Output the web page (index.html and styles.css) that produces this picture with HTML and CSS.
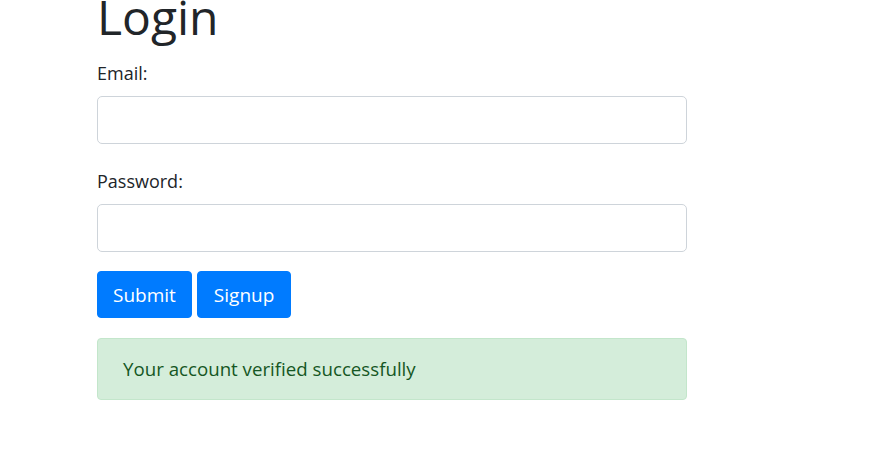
FILE: index.html
```html
<!DOCTYPE html>
<html>
<head>
<meta charset="utf-8">
<link rel="stylesheet" href="styles.css">
</head>
<body>
<div class="container">
  <h1 class="title">Login</h1>
  <form class="form">
    <div class="group">
      <label class="label" for="email">Email:</label>
      <input class="control" id="email" type="email">
    </div>
    <div class="group">
      <label class="label" for="pwd">Password:</label>
      <input class="control" id="pwd" type="password">
    </div>
    <div class="buttons">
      <button type="button" class="btn">Submit</button>
      <button type="button" class="btn btn-wide">Signup</button>
    </div>
    <div class="alert">Your account verified successfully</div>
  </form>
</div>
</body>
</html>
```

FILE: styles.css
```css
html, body {
  margin: 0;
  padding: 0;
  background: #fff;
}
body {
  font-family: "Open Sans", "Noto Sans", sans-serif;
  color: #212529;
  font-size: 18px;
  line-height: 1.5;
}
.container {
  width: 590px;
  padding-left: 97px;
}
.title {
  font-size: 48px;
  font-weight: 400;
  line-height: 56px;
  margin: -11px 0 0 0;
}
.form {
  display: flex;
  flex-direction: column;
}
.group {
  display: flex;
  flex-direction: column;
}
.label {
  display: block;
  font-size: 18px;
  line-height: 24px;
  margin-top: 16px;
  margin-bottom: 11px;
}
.group + .group .label {
  margin-top: 25px;
  margin-bottom: 11px;
}
.control {
  box-sizing: border-box;
  height: 48px;
  width: 100%;
  border: 1px solid #ced4da;
  border-radius: 5px;
  padding: 8px 16px;
  font-size: 20px;
  font-family: inherit;
  margin: 0;
}
.buttons {
  display: flex;
  gap: 5px;
  margin-top: 19px;
}
.btn {
  box-sizing: border-box;
  height: 47px;
  padding: 0 15px;
  border: 1px solid #007bff;
  background: #007bff;
  color: #fff;
  font-family: inherit;
  font-size: 19px;
  border-radius: 4px;
}
.btn-wide {
  padding: 0 16px;
}
.alert {
  margin-top: 20px;
  box-sizing: border-box;
  height: 62px;
  display: flex;
  align-items: center;
  padding: 0 25px;
  background: #d4edda;
  border: 1px solid #c3e6cb;
  color: #155724;
  border-radius: 4px;
  font-size: 18.7px;
}
```
